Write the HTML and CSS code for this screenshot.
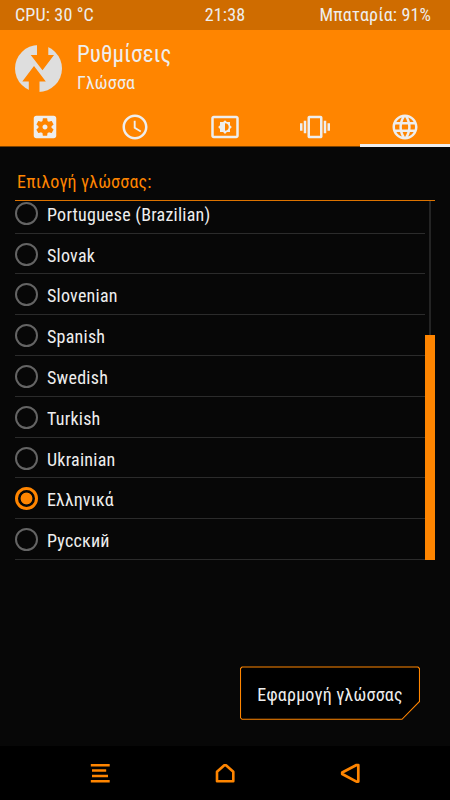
FILE: index.html
```html
<!DOCTYPE html>
<html lang="el">
<head>
<meta charset="utf-8">
<title>Ρυθμίσεις</title>
<link rel="stylesheet" href="styles.css">
</head>
<body>
<div class="status"><span>CPU: 30 °C</span><span class="clock">21:38</span><span class="battery">Μπαταρία: 91%</span></div>
<header class="header">
  <div class="brand">
    <svg class="logo" viewBox="0 0 48 48"><circle cx="23.5" cy="23.500" r="23.5" fill="#dedede"/><path fill="#ff8500" d="M22 -1H33.3V10H39L27.5 25.3L15.7 10H22ZM19 21L30.800 36.500H24.500V49H13.800V36.500H7.300Z"/></svg>
    <div class="titles"><h1>Ρυθμίσεις</h1><p>Γλώσσα</p></div>
  </div>
  <nav class="tabs">
    <a><svg viewBox="0 0 24 24"><path d="M12 10c-1.1 0-2 .9-2 2s.9 2 2 2 2-.9 2-2-.9-2-2-2zm7-7H5c-1.11 0-2 .9-2 2v14c0 1.1.89 2 2 2h14c1.11 0 2-.9 2-2V5c0-1.1-.89-2-2-2zm-1.75 9c0 .23-.02.46-.05.68l1.48 1.16c.13.11.17.3.08.45l-1.4 2.42c-.09.15-.27.21-.43.15l-1.74-.7c-.36.28-.76.51-1.18.69l-.26 1.85c-.03.17-.18.3-.35.3h-2.8c-.17 0-.32-.13-.35-.29l-.26-1.85c-.43-.18-.82-.41-1.18-.69l-1.74.7c-.16.06-.34 0-.43-.15l-1.4-2.42c-.09-.15-.05-.34.08-.45l1.48-1.16c-.03-.23-.05-.46-.05-.69 0-.23.02-.46.05-.68l-1.48-1.16c-.13-.11-.17-.3-.08-.45l1.4-2.42c.09-.15.27-.21.43-.15l1.74.7c.36-.28.76-.51 1.18-.69l.26-1.85c.03-.17.18-.3.35-.3h2.8c.17 0 .32.13.35.29l.26 1.85c.43.18.82.41 1.18.69l1.74-.7c.16-.06.34 0 .43.15l1.4 2.42c.09.15.05.34-.08.45l-1.48 1.16c.03.23.05.46.05.69z"/></svg></a>
    <a><svg viewBox="0 0 24 24"><path d="M11.99 2C6.47 2 2 6.48 2 12s4.47 10 9.99 10C17.52 22 22 17.52 22 12S17.52 2 11.99 2zM12 20c-4.42 0-8-3.58-8-8s3.58-8 8-8 8 3.58 8 8-3.58 8-8 8zm.5-13H11v6l5.25 3.15.75-1.23-4.5-2.67z"/></svg></a>
    <a><svg viewBox="0 0 24 24"><path d="M21 3H3c-1.1 0-2 .9-2 2v14c0 1.1.9 2 2 2h18c1.1 0 2-.9 2-2V5c0-1.1-.9-2-2-2zm0 16.01H3V4.99h18v14.02zM8 16h2.5l1.5 1.5 1.5-1.5H16v-2.5l1.5-1.5-1.5-1.5V8h-2.5L12 6.5 10.5 8H8v2.5L6.5 12 8 13.5V16zm4-7c1.66 0 3 1.34 3 3s-1.34 3-3 3V9z"/></svg></a>
    <a><svg viewBox="0 0 24 24"><path d="M0 15h2V9H0v6zm3 2h2V7H3v10zm19-8v6h2V9h-2zm-3 8h2V7h-2v10zM16.5 3h-9C6.67 3 6 3.67 6 4.5v15c0 .83.67 1.5 1.5 1.5h9c.83 0 1.5-.67 1.5-1.5v-15c0-.83-.67-1.5-1.5-1.5zM16 19H8V5h8v14z"/></svg></a>
    <a class="active"><svg viewBox="0 0 24 24"><path d="M11.99 2C6.47 2 2 6.48 2 12s4.47 10 9.99 10C17.52 22 22 17.52 22 12S17.52 2 11.99 2zm6.93 6h-2.95c-.32-1.25-.78-2.45-1.38-3.56 1.84.63 3.37 1.91 4.33 3.56zM12 4.04c.83 1.2 1.48 2.53 1.91 3.96h-3.82c.43-1.43 1.08-2.76 1.91-3.96zM4.26 14C4.1 13.36 4 12.69 4 12s.1-1.36.26-2h3.38c-.08.66-.14 1.32-.14 2 0 .68.06 1.34.14 2H4.26zm.82 2h2.95c.32 1.25.78 2.45 1.38 3.56-1.84-.63-3.37-1.9-4.33-3.56zm2.95-8H5.08c.96-1.66 2.49-2.93 4.33-3.56C8.81 5.55 8.35 6.75 8.03 8zM12 19.96c-.83-1.2-1.48-2.53-1.91-3.96h3.82c-.43 1.43-1.08 2.76-1.91 3.96zM14.34 14H9.66c-.09-.66-.16-1.32-.16-2 0-.68.07-1.35.16-2h4.68c.09.65.16 1.32.16 2 0 .68-.07 1.34-.16 2zm.25 5.56c.6-1.11 1.06-2.31 1.38-3.56h2.95c-.96 1.65-2.49 2.93-4.33 3.56zM16.36 14c.08-.66.14-1.32.14-2 0-.68-.06-1.34-.14-2h3.38c.16.64.26 1.31.26 2s-.1 1.36-.26 2h-3.38z"/></svg></a>
  </nav>
</header>
<main class="content">
  <h2><span>Επιλογή γλώσσας:</span></h2>
  <div class="listbox">
    <ul class="list">
      <li><i class="radio"></i><span>Portuguese (Brazilian)</span></li>
      <li><i class="radio"></i><span>Slovak</span></li>
      <li><i class="radio"></i><span>Slovenian</span></li>
      <li><i class="radio"></i><span>Spanish</span></li>
      <li><i class="radio"></i><span>Swedish</span></li>
      <li><i class="radio"></i><span>Turkish</span></li>
      <li><i class="radio"></i><span>Ukrainian</span></li>
      <li class="selected"><i class="radio on"></i><span>Ελληνικά</span></li>
      <li><i class="radio"></i><span>Русский</span></li>
    </ul>
    <div class="scroll"><div class="track"></div><div class="thumb"></div></div>
  </div>
  <button class="apply"><svg viewBox="0 0 180 54"><path d="M2 1H178L179.500 2.500V35.500L162 53.300H2L.5 51.800V2.500Z" fill="#000" stroke="#ff8500" stroke-width="1.100"/></svg><span>Εφαρμογή γλώσσας</span></button>
</main>
<footer class="navbar">
  <svg viewBox="0 0 20 20"><path d="M.8 2.200H19.700M2 7.500H16.200M2 12.900H18M.8 18.200H19.700" stroke-width="2.500"/></svg>
  <svg viewBox="0 0 20 20"><path d="M2 8.800V18.300H18.300V8.800L11 2.200H9.300Z" stroke-width="2.600"/></svg>
  <svg viewBox="0 0 20 20"><path d="M18.300 2H16.500L2.200 9.500V11L16.500 18.600H18.300Z" stroke-width="2.700"/></svg>
</footer>
</body>
</html>
```
FILE: styles.css
```css
* { box-sizing: border-box; margin: 0; padding: 0; }
body {
  width: 450px; height: 800px; overflow: hidden;
  display: flex; flex-direction: column;
  background: #070707; color: #eee;
  font-family: "Roboto Condensed", Roboto, sans-serif;
  font-stretch: 75%; font-size: 18px; line-height: 1;
}
span { white-space: nowrap; }
.status {
  height: 30px; background: #cf6c00; padding: 0 19px 1px 15px; letter-spacing: .15px;
  display: grid; grid-template-columns: 1fr auto 1fr; align-items: center;
}
.clock { padding-left: 4px; }
.battery { text-align: right; }
.header { height: 117px; background: #ff8500; display: flex; flex-direction: column; box-shadow: inset 0 -1px #7a4100; }
.brand { height: 76px; display: flex; padding: 15px 0 0 15px; gap: 14px; }
.logo { width: 48px; height: 48px; }
h1 { font-size: 23px; font-weight: 400; line-height: 28px; margin-top: -4px; letter-spacing: .1px; }
.titles p { line-height: 26px; margin-top: 1px; letter-spacing: .15px; }
.tabs { flex: 1; display: grid; grid-template-columns: repeat(5, 1fr); }
.tabs a { display: flex; justify-content: center; padding-top: 5px; border-bottom: 3px solid transparent; }
.tabs a.active { border-color: #eee; }
.tabs svg { width: 30px; height: 30px; margin-top: .5px; fill: #eee; }
.content { flex: 1; padding: 0 15px; display: flex; flex-direction: column; }
h2 { height: 54px; padding: 26px 0 0 2px; font-size: 18px; font-weight: 400; color: #ff8500; border-bottom: 1px solid #dd7300; letter-spacing: .18px; }
.listbox { height: 359px; display: flex; }
.list { width: 410px; height: 359px; overflow: hidden; list-style: none; display: flex; flex-direction: column; justify-content: flex-end; }
li { flex: none; height: 40.800px; display: flex; align-items: center; gap: 9px; border-bottom: 1px solid #2b2b2b; letter-spacing: .24px; }
li.selected { letter-spacing: .05px; }
li span { padding-top: 4px; }
.radio { width: 23px; height: 23px; margin-top: 1px; border: 2px solid #646464; border-radius: 50%; }
.radio.on { border: 3px solid #ff8500; background: radial-gradient(circle, #ff8500 5.500px, transparent 6.300px); }
.scroll { width: 10px; display: flex; flex-direction: column; align-items: center; }
.track { width: 2px; height: 134px; background: #242424; }
.thumb { width: 10px; flex: 1; background: #ff8500; }
.apply {
  align-self: flex-end; margin: 106px 15px 0 0; width: 180px; height: 54px;
  display: grid; place-items: center; border: 0; background: none; color: #eee; font: inherit; letter-spacing: .22px;
}
.apply > * { grid-area: 1 / 1; }
.apply svg { width: 180px; height: 54px; }
.apply span { padding-top: 3px; }
.navbar { height: 54px; background: #000; padding: 0 25px; display: grid; grid-template-columns: repeat(3, 125px); justify-content: center; justify-items: center; align-items: center; }
.navbar svg { width: 20px; height: 20px; fill: none; stroke: #ff8500; stroke-linejoin: round; }
```
